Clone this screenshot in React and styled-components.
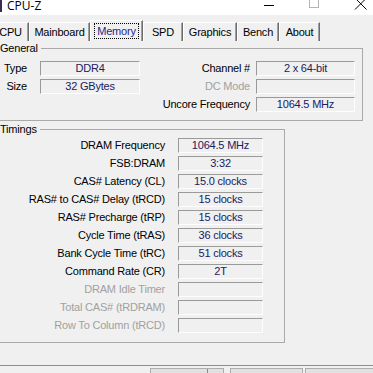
import styled, { createGlobalStyle } from "styled-components";

const GlobalStyle = createGlobalStyle`
  html, body {
    margin: 0;
    padding: 0;
    overflow: hidden;
    background: #f0f0f0;
  }
  body {
    font-family: "Liberation Sans", Arial, sans-serif;
    font-size: 11px;
    letter-spacing: -0.2px;
    color: #000;
  }
`

const Window = styled.div`
  width: 373px;
  height: 373px;
  overflow: hidden;
  background: #f0f0f0;
`

const TitleBar = styled.div`
  display: flex;
  align-items: flex-start;
  height: 15px;
  background: #fff;
`

const AppIcon = styled.div`
  flex: none;
  width: 2px;
  height: 12px;
  background: #3b2a55;
`

const Title = styled.div`
  margin: 1px 0 0 5px;
  font-family: "Open Sans", "Noto Sans", sans-serif;
  font-size: 12px;
  line-height: 9px;
  letter-spacing: 0;
  color: #000;
`

const Spacer = styled.div`
  flex: 1;
`

const Controls = styled.div`
  flex: none;
  display: flex;
  margin-right: -11px;
`

const ControlBox = styled.div`
  width: 46px;
  height: 15px;
  svg { display: block; }
`

const TabStrip = styled.div`
  display: flex;
  align-items: flex-end;
  height: 21px;
  margin: 5px 0 0 -8px;
`

const Tab = styled.div`
  box-sizing: border-box;
  flex: none;
  width: ${p => p.$w}px;
  height: ${p => (p.$active ? 21 : 19)}px;
  border-top: 1px solid #fff;
  border-left: 1px solid #fff;
  border-right: 1px solid #6d6d6d;
  box-shadow: inset -1px 0 0 #a0a0a0;
  display: flex;
  align-items: center;
  justify-content: center;
  color: ${p => (p.$active ? "#25258f" : "#000")};
  line-height: 14px;
`

const Focus = styled.span`
  border: 1px dotted #000;
  padding: 0 2px;
  line-height: 14px;
`

const Panel = styled.div`
  padding-top: 1px;
`

const Group = styled.fieldset`
  box-sizing: border-box;
  width: ${p => p.$w}px;
  margin: ${p => p.$mt}px 0 0 -7px;
  padding: ${p => p.$pt}px ${p => p.$pr}px ${p => p.$pb}px 6px;
  border: 1px solid #a9a9a9;
  min-inline-size: 0;
`

const Legend = styled.legend`
  padding: 0 3px 0 0;
  margin: 0;
  line-height: 13px;
  color: #000;
`

const Grid = styled.div`
  display: grid;
  grid-template-columns: ${p => p.$cols};
  grid-auto-rows: 15px;
  row-gap: 3px;
  align-items: center;
`

const Label = styled.div`
  text-align: right;
  white-space: nowrap;
  padding-right: ${p => p.$pad}px;
  color: ${p => (p.$off ? "#a0a0a0" : "#000")};
  line-height: 13px;
`

const Field = styled.div`
  box-sizing: border-box;
  height: 15px;
  border-top: 1px solid #9a9a9a;
  border-left: 1px solid #9a9a9a;
  border-right: 1px solid #fdfdfd;
  border-bottom: 1px solid #fdfdfd;
  background: #f0f0f0;
  color: #20205e;
  text-align: center;
  line-height: 13px;
  white-space: nowrap;
`

const Footer = styled.div`
  display: flex;
  gap: 2px;
  margin-top: 22px;
  padding: 2px 0 0 150px;
  border-top: 1px solid #8e8e8e;
`

const Button = styled.div`
  box-sizing: border-box;
  flex: none;
  width: ${p => p.$w}px;
  height: 22px;
  margin-left: ${p => p.$ml || 0}px;
  border: 1px solid #adadad;
  background: #e1e1e1;
  display: flex;
`

const SplitArrow = styled.div`
  margin-left: auto;
  width: 15px;
  border-left: 1px solid #8a8a8a;
`

const tabs = [
  ["CPU", 37],
  ["Mainboard", 61],
  ["Memory", 53],
  ["SPD", 40],
  ["Graphics", 54],
  ["Bench", 42],
  ["About", 41],
];

const general = [
  ["Type", "DDR4", "Channel #", "2 x 64-bit", false],
  ["Size", "32 GBytes", "DC Mode", "", true],
  ["", null, "Uncore Frequency", "1064.5 MHz", false],
];

const timings = [
  ["DRAM Frequency", "1064.5 MHz"],
  ["FSB:DRAM", "3:32"],
  ["CAS# Latency (CL)", "15.0 clocks"],
  ["RAS# to CAS# Delay (tRCD)", "15 clocks"],
  ["RAS# Precharge (tRP)", "15 clocks"],
  ["Cycle Time (tRAS)", "36 clocks"],
  ["Bank Cycle Time (tRC)", "51 clocks"],
  ["Command Rate (CR)", "2T"],
  ["DRAM Idle Timer", "", true],
  ["Total CAS# (tRDRAM)", "", true],
  ["Row To Column (tRCD)", "", true],
];

export default function App() {
  return (
    <Window>
      <GlobalStyle />
      <TitleBar>
        <AppIcon />
        <Title>CPU-Z</Title>
        <Spacer />
        <Controls>
          <ControlBox>
            <svg width="46" height="15" viewBox="0 0 46 15">
              <line x1="18" y1="5.5" x2="28" y2="5.5" stroke="#000" strokeWidth="1" />
            </svg>
          </ControlBox>
          <ControlBox>
            <svg width="46" height="15" viewBox="0 0 46 15">
              <rect x="17.5" y="-1.5" width="9" height="9" fill="none" stroke="#b4b4b4" strokeWidth="1" />
            </svg>
          </ControlBox>
          <ControlBox>
            <svg width="46" height="15" viewBox="0 0 46 15">
              <path d="M17 -2 L28.5 9.5 M28.5 -2 L17 9.5" stroke="#000" strokeWidth="1" fill="none" />
            </svg>
          </ControlBox>
        </Controls>
      </TitleBar>

      <TabStrip>
        {tabs.map(([name, w]) => (
          <Tab key={name} $w={w} $active={name === "Memory"}>
            {name === "Memory" ? <Focus>{name}</Focus> : name}
          </Tab>
        ))}
      </TabStrip>

      <Panel>
        <Group $w={370} $mt={0} $pt={6} $pr={7} $pb={8}>
          <Legend>General</Legend>
          <Grid $cols="40px 100px 116px 99px">
            {general.map(([l1, v1, l2, v2, off]) => [
              <Label key={l2 + "a"} $pad={13}>{l1}</Label>,
              v1 === null ? <div key={l2 + "b"} /> : <Field key={l2 + "b"}>{v1}</Field>,
              <Label key={l2 + "c"} $pad={6} $off={off}>{l2}</Label>,
              <Field key={l2 + "d"}>{v2}</Field>,
            ])}
          </Grid>
        </Group>

        <Group $w={292} $mt={2} $pt={2} $pr={21} $pb={9}>
          <Legend>Timings</Legend>
          <Grid $cols="178px 85px">
            {timings.map(([label, value, off]) => [
              <Label key={label + "l"} $pad={13} $off={off}>{label}</Label>,
              <Field key={label + "v"}>{value}</Field>,
            ])}
          </Grid>
        </Group>
      </Panel>

      <Footer>
        <Button $w={74}>
          <SplitArrow />
        </Button>
        <Button $w={73} $ml={4} />
        <Button $w={73} />
      </Footer>
    </Window>
  );
}
